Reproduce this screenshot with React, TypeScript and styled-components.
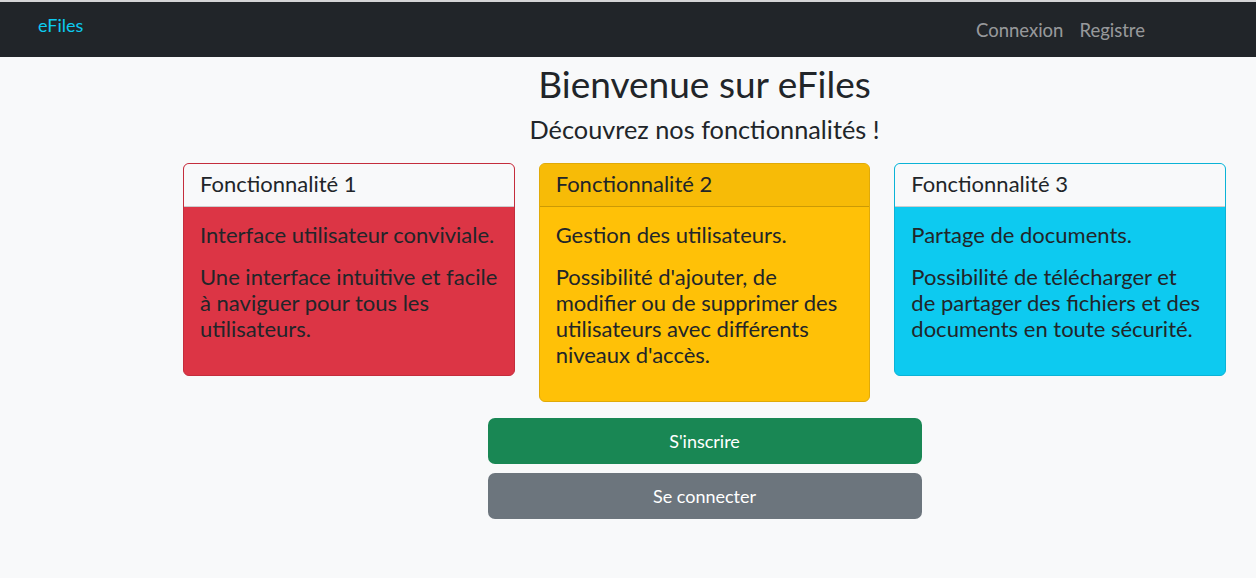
import { FC } from 'react'
import styled, { createGlobalStyle } from 'styled-components'

const FONT = `"Lato", "Noto Sans", sans-serif`

const GlobalStyle = createGlobalStyle`
  html, body {
    margin: 0;
    padding: 0;
  }
  body {
    background: #f8f9fa;
    font-family: ${FONT};
    color: #212529;
    -webkit-font-smoothing: antialiased;
  }
  * {
    box-sizing: border-box;
  }
`

type Variant = 'danger' | 'warning' | 'info'

const features: { title: string; lead: string; text: string; variant: Variant }[] = [
  {
    title: 'Fonctionnalité 1',
    lead: 'Interface utilisateur conviviale.',
    text: 'Une interface intuitive et facile à naviguer pour tous les utilisateurs.',
    variant: 'danger'
  },
  {
    title: 'Fonctionnalité 2',
    lead: 'Gestion des utilisateurs.',
    text: "Possibilité d'ajouter, de modifier ou de supprimer des utilisateurs avec différents niveaux d'accès.",
    variant: 'warning'
  },
  {
    title: 'Fonctionnalité 3',
    lead: 'Partage de documents.',
    text: 'Possibilité de télécharger et de\u00a0partager des fichiers et des documents en toute sécurité.',
    variant: 'info'
  }
]

const palette: Record<Variant, { bg: string; border: string; header: string }> = {
  danger: { bg: '#dc3545', border: '#c42d3c', header: '#f8f9fa' },
  warning: { bg: '#ffc107', border: '#e0aa08', header: '#f7bb07' },
  info: { bg: '#0dcaf0', border: '#0bb3d6', header: '#f8f9fa' }
}

const App: FC = () => {
  return (
    <>
      <GlobalStyle />
      <Navbar>
        <Brand href="#">eFiles</Brand>
        <NavLinks>
          <NavLink href="#">Connexion</NavLink>
          <NavLink href="#">Registre</NavLink>
        </NavLinks>
      </Navbar>

      <Main>
        <Title>Bienvenue sur eFiles</Title>
        <Subtitle>Découvrez nos fonctionnalités !</Subtitle>

        <CardRow>
          {features.map((f) => (
            <Card key={f.title} $variant={f.variant}>
              <CardHeader $variant={f.variant}>{f.title}</CardHeader>
              <CardBody>
                <CardText>{f.lead}</CardText>
                <CardText>{f.text}</CardText>
              </CardBody>
            </Card>
          ))}
        </CardRow>

        <Actions>
          <ActionButton $bg="#198754">S'inscrire</ActionButton>
          <ActionButton $bg="#6c757d">Se connecter</ActionButton>
        </Actions>
      </Main>
    </>
  )
}

const Navbar = styled.nav`
  height: 57px;
  background: #212529;
  border-top: 2px solid #d4d5d6;
  display: flex;
  align-items: flex-start;
  justify-content: space-between;
  padding: 0 111px 0 38px;
`

const Brand = styled.a`
  margin-top: 13px;
  font-size: 18px;
  line-height: 1.2;
  color: #0dcaf0;
  text-decoration: none;
`

const NavLinks = styled.div`
  display: flex;
  gap: 16px;
  margin-top: 17px;
`

const NavLink = styled.a`
  font-size: 18.5px;
  line-height: 1.2;
  color: rgba(255, 255, 255, 0.55);
  text-decoration: none;
`

const Main = styled.main`
  width: 1043px;
  margin-left: 183px;
  padding-top: 5px;
  display: flex;
  flex-direction: column;
  align-items: center;
`

const Title = styled.h1`
  margin: 0 0 8px;
  font-size: 37px;
  font-weight: 400;
  line-height: 1.2;
`

const Subtitle = styled.h3`
  margin: 0 0 18px;
  font-size: 25.3px;
  font-weight: 400;
  line-height: 1.2;
`

const CardRow = styled.div`
  width: 100%;
  display: grid;
  grid-template-columns: repeat(3, 1fr);
  gap: 24px;
  align-items: start;
`

const Card = styled.div<{ $variant: Variant }>`
  background: ${(p) => palette[p.$variant].bg};
  border: 1px solid ${(p) => palette[p.$variant].border};
  border-radius: 6px;
  overflow: hidden;
`

const CardHeader = styled.div<{ $variant: Variant }>`
  background: ${(p) => palette[p.$variant].header};
  border-bottom: 1px solid rgba(0, 0, 0, 0.175);
  padding: 7px 16px 9px;
  font-size: 22px;
  line-height: 26px;
`

const CardBody = styled.div`
  padding: 15px 16px 17px;
`

const CardText = styled.p`
  margin: 0 0 16px;
  font-size: 22px;
  line-height: 26px;
`

const Actions = styled.div`
  width: 434px;
  margin-top: 16px;
  display: flex;
  flex-direction: column;
  gap: 9px;
`

const ActionButton = styled.button<{ $bg: string }>`
  height: 46px;
  border: none;
  border-radius: 7px;
  background: ${(p) => p.$bg};
  color: #fff;
  font-family: ${FONT};
  font-size: 18px;
  cursor: pointer;
`

export default App
